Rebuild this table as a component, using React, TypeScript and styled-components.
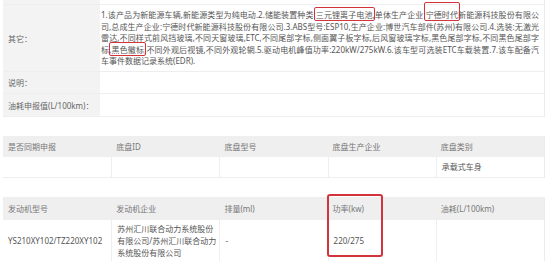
import styled, { createGlobalStyle } from "styled-components";

const GlobalStyle = createGlobalStyle`
  html, body {
    margin:0;
    padding:0;
    background:#fff;
  }
  body {
    font-family:"Noto Sans", "Noto Sans CJK SC", sans-serif;
    color:#555;
  }
`;

const Page = styled.div`
  width:542px;
  padding:0 5px 0 3px;
  display:flex;
  flex-direction:column;
  gap:19px;
`;

const DetailTable = styled.div`
  display:flex;
  flex-direction:column;
  border-right:1px solid #ececec;
`;

const DetailRow = styled.div<{ $h?: number }>`
  display:flex;
  min-height:${({ $h }) => ($h ? `${$h}px` : "auto")};
  border-bottom:1px solid #eeeeee;
`;

const Label = styled.div`
  width:97px;
  flex-shrink:0;
  background:#f3f3f3;
  padding:0 5px;
  box-sizing:border-box;
  display:flex;
  align-items:center;
  font-size:8px;
  color:#666;
  white-space:nowrap;
`;

const Value = styled.div`
  flex:1;
  padding:3px 5px 3px 1px;
  display:flex;
  flex-direction:column;
  justify-content:center;
  font-size:8px;
  line-height:11.6px;
  color:#555;
`;

const Line = styled.div<{ $last?: boolean }>`
  white-space:nowrap;
  text-align:justify;
  text-align-last:${({ $last }) => ($last ? "left" : "justify")};
  overflow:visible;
`;

const Mark = styled.span<{ $raise?: number }>`
  position:relative;
  &::after {
    content:"";
    position:absolute;
    left:-2px;
    right:-2px;
    top:${({ $raise }) => -2 - ($raise || 0)}px;
    bottom:-1px;
    border:1.5px solid #d3343c;
    border-radius:2px;
  }
`;

const Grid = styled.div`
  position:relative;
  display:grid;
  grid-template-columns:repeat(5, 1fr);
  border-right:1px solid #ececec;
`;

const Head = styled.div<{ $h: number }>`
  height:${({ $h }) => $h}px;
  background:#efefef;
  display:flex;
  align-items:center;
  padding-left:5px;
  font-size:8px;
  color:#777;
`;

const Cell = styled.div<{ $h: number; $first?: boolean }>`
  min-height:${({ $h }) => $h}px;
  display:flex;
  align-items:center;
  padding-left:5px;
  font-size:8px;
  line-height:12px;
  color:#555;
  border-left:${({ $first }) => ($first ? "none" : "1px solid #eeeeee")};
  border-bottom:1px solid #eeeeee;
`;

const Highlight = styled.div`
  position:absolute;
  left:324px;
  top:-3px;
  width:56px;
  height:63px;
  box-sizing:border-box;
  border:2px solid #d3343c;
  border-radius:3px;
`;

const chassisHeads = ["是否同期申报", "底盘ID", "底盘型号", "底盘生产企业", "底盘类别"];
const engineHeads = ["发动机型号", "发动机企业", "排量(ml)", "功率(kw)", "油耗(L/100km)"];

export default function App() {
  return (
    <>
      <GlobalStyle />
      <Page>
        <DetailTable>
          <DetailRow $h={4}>
            <Label />
            <Value style={{ padding: 0 }} />
          </DetailRow>
          <DetailRow $h={66}>
            <Label>其它：</Label>
            <Value>
              <Line>
                1.该产品为新能源车辆,新能源类型为纯电动.2.储能装置种类:<Mark>三元锂离子电池</Mark>,单体生产企业:<Mark $raise={5}>宁德时代</Mark>新能源科技股份有限公
              </Line>
              <Line>司,总成生产企业:宁德时代新能源科技股份有限公司.3.ABS型号:ESP10,生产企业:博世汽车部件(苏州)有限公司.4.选装:无激光</Line>
              <Line>雷达,不同样式前风挡玻璃,不同天窗玻璃,ETC,不同尾部字标,侧面翼子板字标,后风窗玻璃字标,黑色尾部字标,不同黑色尾部字</Line>
              <Line>
                标,<Mark>黑色徽标</Mark>,不同外观后视镜,不同外观轮辋.5.驱动电机峰值功率:220kW/275kW.6.该车型可选装ETC车载装置.7.该车配备汽
              </Line>
              <Line $last>车事件数据记录系统(EDR).</Line>
            </Value>
          </DetailRow>
          <DetailRow $h={21}>
            <Label>说明：</Label>
            <Value />
          </DetailRow>
          <DetailRow $h={22}>
            <Label>油耗申报值(L/100km)：</Label>
            <Value />
          </DetailRow>
        </DetailTable>

        <Grid>
          {chassisHeads.map(h => (
            <Head key={h} $h={21}>{h}</Head>
          ))}
          <Cell $h={20} $first />
          <Cell $h={20} />
          <Cell $h={20} />
          <Cell $h={20} />
          <Cell $h={20}>承载式车身</Cell>
        </Grid>

        <Grid>
          {engineHeads.map(h => (
            <Head key={h} $h={23}>{h}</Head>
          ))}
          <Cell $h={41} $first>YS210XY102/TZ220XY102</Cell>
          <Cell $h={41}>
            苏州汇川联合动力系统股份
            <br />
            有限公司/苏州汇川联合动力
            <br />
            系统股份有限公司
          </Cell>
          <Cell $h={41}>-</Cell>
          <Cell $h={41}>220/275</Cell>
          <Cell $h={41} />
          <Highlight />
        </Grid>
      </Page>
    </>
  );
}
